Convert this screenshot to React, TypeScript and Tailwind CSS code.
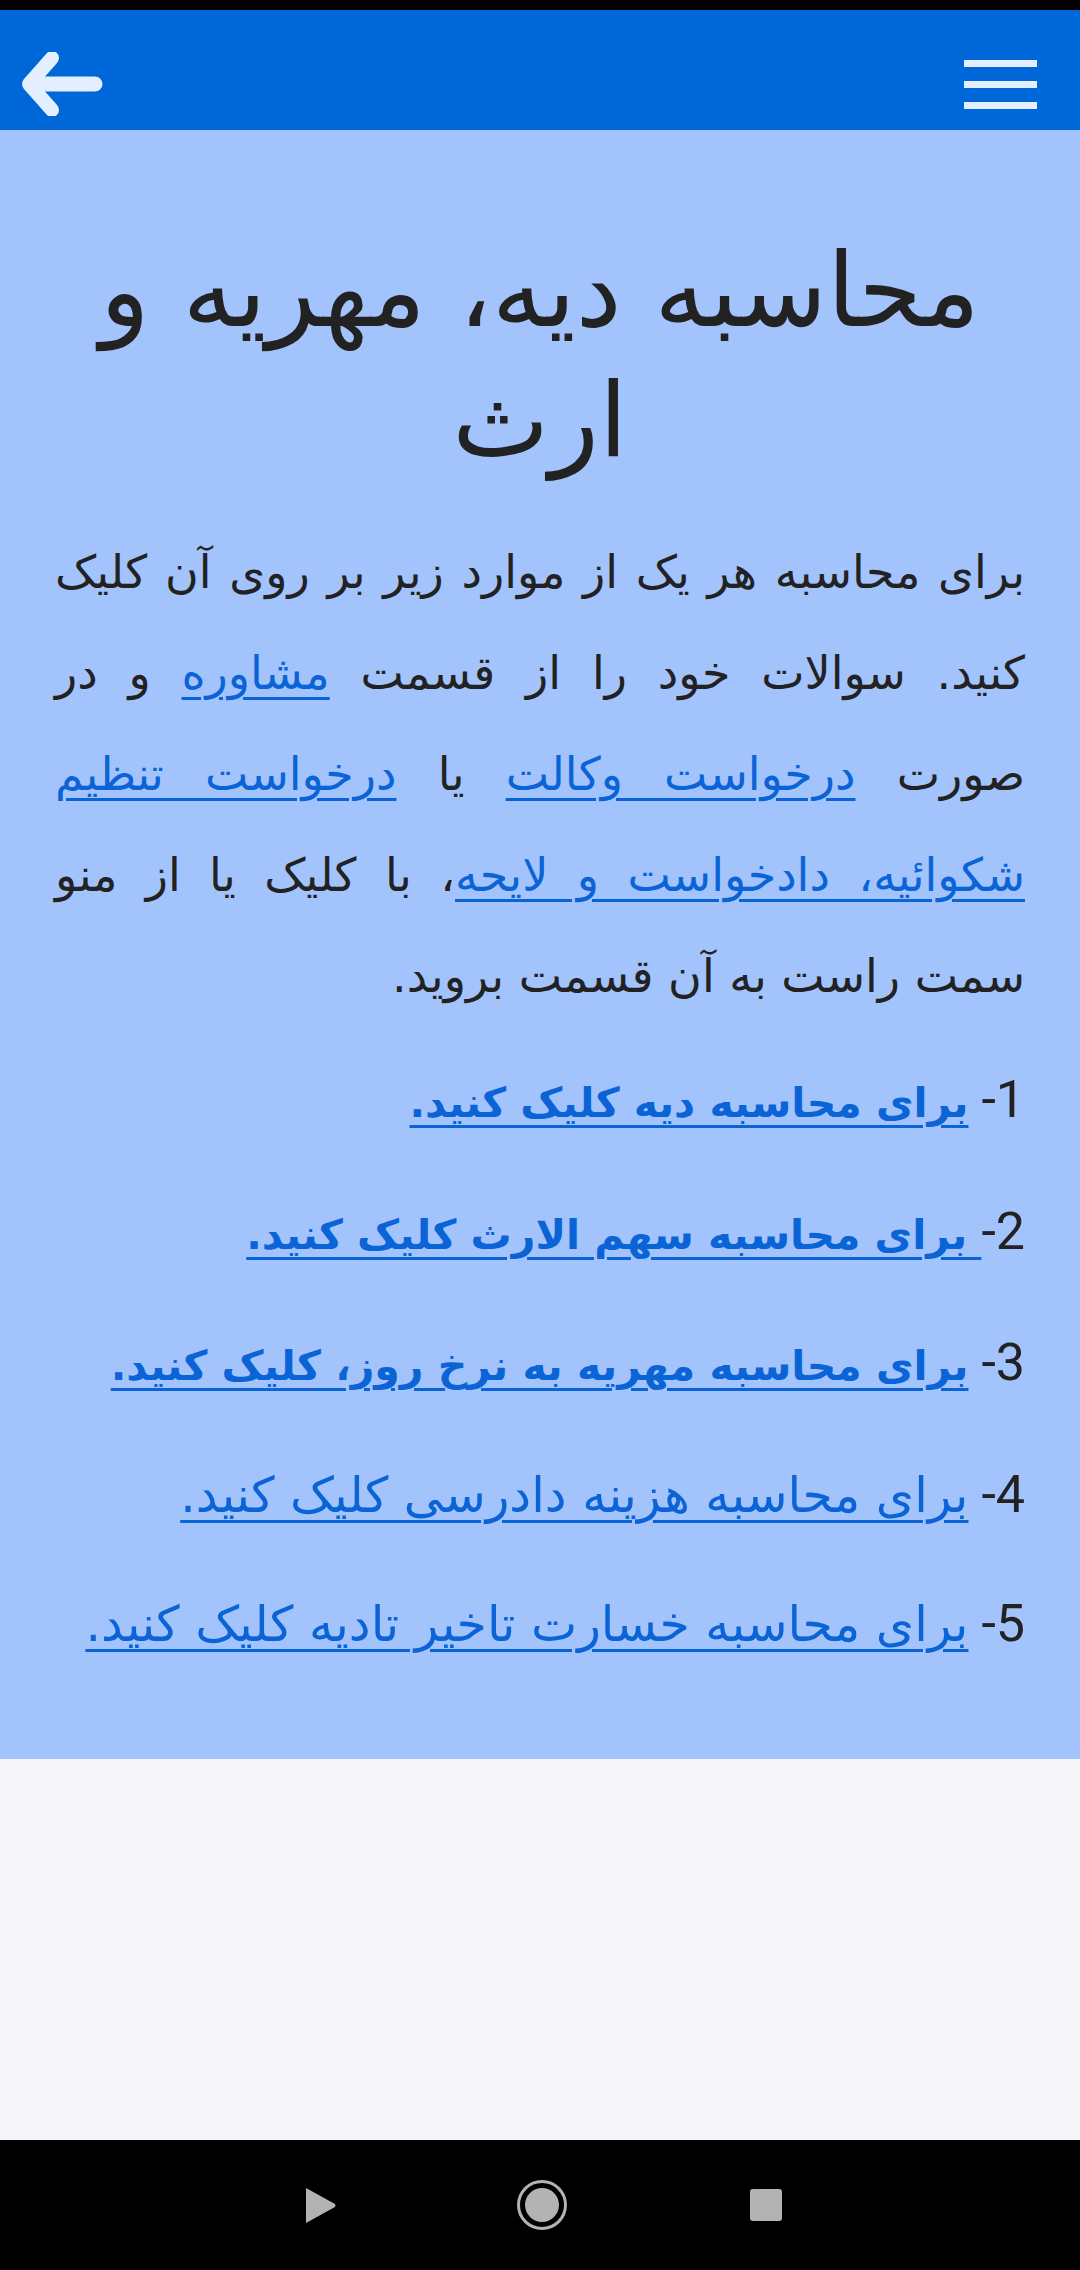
import React from "react";

const items = [
  { n: "1- ", text: "برای محاسبه دیه کلیک کنید.", bold: true },
  { n: "2-", text: " برای محاسبه سهم الارث کلیک کنید.", bold: true },
  { n: "3- ", text: "برای محاسبه مهریه به نرخ روز، کلیک کنید.", bold: true },
  { n: "4- ", text: "برای محاسبه هزینه دادرسی کلیک کنید.", bold: false },
  { n: "5- ", text: "برای محاسبه خسارت تاخیر تادیه کلیک کنید.", bold: false },
];

const linkClass = "text-[#0a64d6] underline decoration-[3px] underline-offset-[8px]";

export default function App() {
  return (
    <div className="min-h-[2270px] flex flex-col bg-[#f6f6fa] font-['DejaVu_Sans',sans-serif]">
      <div className="h-[10px] bg-black" />

      <header className="h-[120px] bg-[#0067d8] flex items-center justify-between pt-[28px] pl-[21px] pr-[43px]">
        <svg width="82" height="64" viewBox="0 0 82 64" fill="none">
          <path d="M22 32 H74" stroke="#e3eeff" strokeWidth="15" strokeLinecap="round" />
          <path d="M31 6 L8 32 L31 58" stroke="#e3eeff" strokeWidth="14" strokeLinecap="round" strokeLinejoin="round" />
        </svg>
        <div className="flex flex-col gap-[14px] w-[73px]">
          <div className="h-[7px] bg-[#e3eeff]" />
          <div className="h-[7px] bg-[#e3eeff]" />
          <div className="h-[7px] bg-[#e3eeff]" />
        </div>
      </header>

      <main dir="rtl" className="h-[1629px] bg-[#a3c3fd] px-[55px] pt-[95px] text-[#222222]">
        <h1 className="text-center text-[103px] leading-[130px] font-normal px-[20px]">
          محاسبه دیه، مهریه و ارث
        </h1>

        <p className="mt-[37px] text-justify text-[46px] leading-[101px]">
          برای محاسبه هر یک از موارد زیر بر روی آن کلیک کنید. سوالات خود را از قسمت{" "}
          <a href="#" className={linkClass}>مشاوره</a> و در صورت{" "}
          <a href="#" className={linkClass}>درخواست وکالت</a> یا{" "}
          <a href="#" className={linkClass}>درخواست تنظیم شکوائیه، دادخواست و لایحه</a>، با کلیک یا از منو
          سمت راست به آن قسمت بروید.
        </p>

        <div className="mt-[9px] flex flex-col">
          {items.map((it) => (
            <p key={it.n} className={`leading-[128.5px] ${it.bold ? "text-[41px]" : "text-[49px]"}`}>
              <span className="font-['Roboto',sans-serif] text-[52px]">{it.n}</span>
              <a href="#" className={`${linkClass} ${it.bold ? "font-bold" : "font-normal"}`}>
                {it.text}
              </a>
            </p>
          ))}
        </div>
      </main>

      <div className="flex-1 bg-[#f6f6fa]" />

      <nav className="h-[130px] bg-black flex items-center">
        <div className="w-[305px]" />
        <svg width="32" height="37" viewBox="0 0 32 37">
          <path d="M1 1 L30 17 Q31 18.5 30 20 L1 36 Z" fill="#b3b3b3" />
        </svg>
        <div className="w-[180px]" />
        <div className="w-[50px] h-[50px] rounded-full border-[3px] border-[#b3b3b3] flex items-center justify-center">
          <div className="w-[34px] h-[34px] rounded-full bg-[#b3b3b3]" />
        </div>
        <div className="w-[183px]" />
        <div className="w-[32px] h-[32px] rounded-[3px] bg-[#b3b3b3]" />
      </nav>
    </div>
  );
}
